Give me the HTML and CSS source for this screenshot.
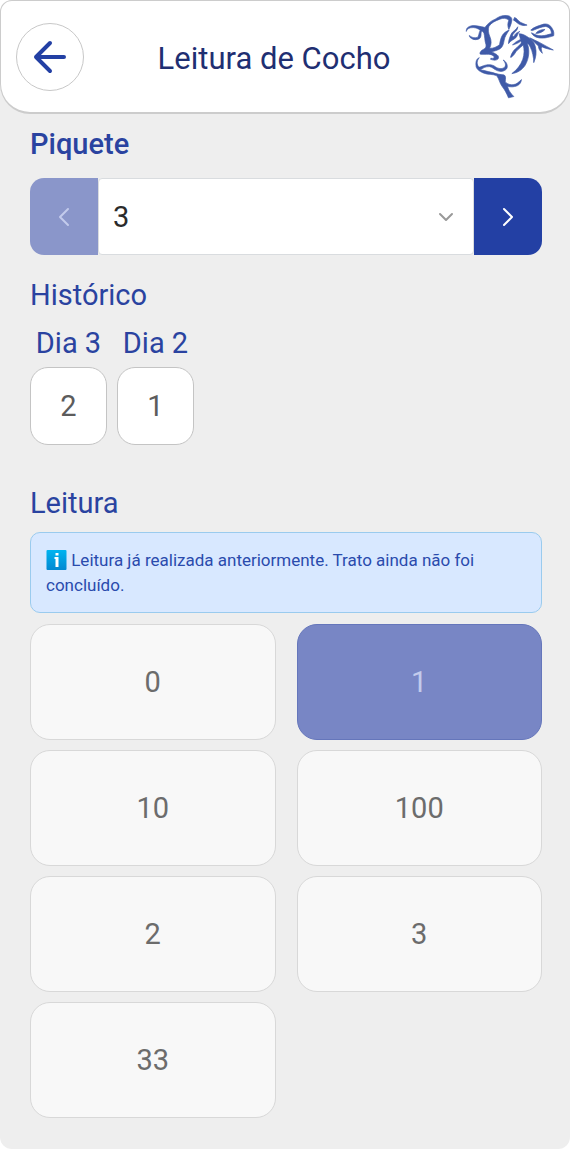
FILE: index.html
```html
<!DOCTYPE html>
<html lang="pt-BR">
<head>
<meta charset="utf-8">
<meta name="viewport" content="width=device-width, initial-scale=1">
<title>Leitura de Cocho</title>
<link rel="stylesheet" href="styles.css">
</head>
<body>
<div class="app">
  <header class="header">
    <button class="back" type="button" aria-label="Voltar">
      <svg class="back-icon" viewBox="0 0 34 34" aria-hidden="true"><path d="M31 17H3M17 3L3 17l14 14"/></svg>
    </button>
    <h1 class="title">Leitura de Cocho</h1>
    <svg class="logo" viewBox="30 25 280 264" aria-hidden="true">
      <path d="M37 80C36 70 43 65 53 63C67 61 80 66 93 68C101 57 111 48 124 43C134 36 145 31 157 32C168 32 175 38 174 46C173 56 169 65 165 74C162 67 160 58 165 46C158 40 148 39 138 43C126 48 112 53 105 65C102 73 103 85 108 96C113 108 113 119 107 131C119 131 128 127 137 120C139 108 141 99 146 91C150 85 156 80 166 76C158 88 153 96 151 106C149 117 147 126 139 132C131 137 122 139 113 141C123 147 134 150 134 158C134 166 124 169 110 164L111 161C118 162 121 160 121 156C116 151 108 147 98 149L80 149C76 148 78 141 85 136C94 132 98 127 96 119C92 108 93 95 90 85L85 79C79 83 83 91 80 97C78 104 68 106 58 104C50 101 45 96 46 92C52 98 62 101 70 98C76 94 74 84 79 77C72 70 61 67 50 69C42 71 39 74 37 80Z"/>
      <path d="M76 159C71 165 69 171 70 178C73 187 75 190 84 185C96 180 110 178 121 184C130 191 141 195 151 189C157 184 156 175 148 166C158 171 164 184 158 193C151 201 139 202 130 198C120 194 115 187 107 186C95 185 86 191 79 196L88 197C98 200 108 202 117 204C130 209 141 210 151 211C157 215 155 223 154 232C162 239 170 242 180 240C189 239 195 232 203 225C202 236 195 244 182 246C173 248 167 246 161 246C164 258 172 268 180 276L164 280C158 266 153 256 145 246C137 236 136 222 128 213C117 208 101 211 88 205C76 200 66 193 66 182C65 172 67 162 76 159Z"/>
      <path d="M182 38C190 40 193 49 201 53C207 56 213 58 220 61C212 64 202 62 194 57C188 53 184 48 179 46Z"/>
      <path d="M192 66C186 77 176 79 172 88C168 97 164 107 164 117C170 107 180 105 187 98C192 93 191 84 198 80C188 84 183 87 182 94C177 96 175 95 177 90C181 82 192 78 192 66Z"/>
      <path d="M231 76C240 67 254 63 270 58C281 56 291 61 296 72C301 79 301 87 300 93C285 98 266 103 250 98C238 94 235 88 233 84C242 89 252 94 264 93C274 93 284 89 293 87C294 75 286 66 275 65C264 66 252 71 242 75C238 77 235 79 231 76Z"/>
      <path d="M274 74C267 82 257 86 246 86C251 78 262 74 274 74Z"/>
      <path d="M196 87C207 87 216 93 225 99C236 106 243 115 245 127C249 142 247 158 240 174C240 158 236 140 230 128C227 121 223 117 220 115C228 134 227 160 214 182C204 197 190 205 174 207C190 195 201 181 207 164C212 149 212 132 208 121C198 130 187 138 182 148C176 155 174 158 170 158C173 143 183 133 192 126C200 119 205 115 201 109C195 115 185 118 176 121C183 112 193 108 200 104Z"/>
      <path d="M228 99C239 105 248 108 257 113C270 120 284 128 299 136C287 134 275 131 264 126C261 133 264 139 266 146C258 139 254 131 254 124C246 115 237 109 228 99Z"/>
    </svg>
  </header>

  <main class="content">
    <label class="heading heading-strong" for="piquete">Piquete</label>
    <div class="picker">
      <button class="step step-prev" type="button" aria-label="Piquete anterior" disabled>
        <svg class="step-icon" viewBox="0 0 12 20" aria-hidden="true"><path d="M10 2L2 10l8 8"/></svg>
      </button>
      <div class="select-wrap">
        <select class="select" id="piquete"><option>3</option></select>
        <svg class="caret" viewBox="0 0 16 10" aria-hidden="true"><path d="M2 2l6 6 6-6"/></svg>
      </div>
      <button class="step step-next" type="button" aria-label="Próximo piquete">
        <svg class="step-icon" viewBox="0 0 12 20" aria-hidden="true"><path d="M2 2l8 8-8 8"/></svg>
      </button>
    </div>

    <h2 class="heading">Histórico</h2>
    <dl class="history">
      <div class="day"><dt class="day-name">Dia 3</dt><dd class="day-value">2</dd></div>
      <div class="day"><dt class="day-name">Dia 2</dt><dd class="day-value">1</dd></div>
    </dl>

    <h2 class="heading">Leitura</h2>
    <p class="notice" role="status"><svg class="info" viewBox="0 0 20 20" role="img" aria-label="Informação"><defs><linearGradient id="info-fill" x1="0" y1="0" x2="0" y2="1"><stop offset="0" stop-color="#00b4f0"/><stop offset="1" stop-color="#0288d1"/></linearGradient></defs><rect width="20" height="20" rx="1" fill="url(#info-fill)"/><path fill="#fff" d="M9 3h3v2.500H9zM8 7h4v10H9V9H8z"/></svg> Leitura já realizada anteriormente. Trato ainda não foi concluído.</p>
    <div class="options">
      <button class="option" type="button" disabled>0</button>
      <button class="option option-selected" type="button" aria-pressed="true" disabled>1</button>
      <button class="option" type="button" disabled>10</button>
      <button class="option" type="button" disabled>100</button>
      <button class="option" type="button" disabled>2</button>
      <button class="option" type="button" disabled>3</button>
      <button class="option" type="button" disabled>33</button>
    </div>
  </main>
</div>
</body>
</html>
```

FILE: styles.css
```css
* {
  box-sizing: border-box;
}

body {
  margin: 0;
  background: #fff;
  font-family: Roboto, "Liberation Sans", sans-serif;
  font-size: 29px;
}

button,
select {
  font: inherit;
}

h1, h2, p, dl, dd {
  margin: 0;
  font-weight: 400;
}

.app {
  min-height: 100vh;
  background: #eee;
  border-radius: 12px;
}

.header {
  display: flex;
  align-items: center;
  justify-content: space-between;
  height: 114px;
  padding: 0 12px 0 15px;
  background: #fff;
  border: 1px solid #ccc;
  border-bottom-width: 2px;
  border-radius: 12px 12px 30px 30px;
}

.back {
  display: grid;
  place-items: center;
  width: 68px;
  height: 68px;
  padding: 0;
  background: #fff;
  border: 1px solid #c8c8c8;
  border-radius: 50%;
}

.back-icon {
  width: 34px;
  height: 34px;
  fill: none;
  stroke: #2340a4;
  stroke-width: 4;
  stroke-linecap: round;
  stroke-linejoin: round;
}

.title {
  padding-top: 4px;
  color: #1f2f72;
  font-size: 31px;
}

.logo {
  width: 93px;
  height: 88px;
  fill: #3f5aa8;
  stroke: #3f5aa8;
  stroke-width: 2;
  stroke-linejoin: round;
}

.content {
  padding: 12px 28px 30px 30px;
}

.heading {
  display: block;
  color: #2a43a0;
  font-size: 29px;
  line-height: 36px;
}

.heading-strong {
  font-weight: 500;
}

.picker {
  display: flex;
  height: 77px;
  margin: 16px 0 22px;
}

.step {
  display: grid;
  place-items: center;
  width: 68px;
  padding: 0;
  border: 0;
  background: #2340a4;
}

.step-prev {
  border-radius: 14px 0 0 14px;
  background: #8a96ca;
}

.step-next {
  border-radius: 0 14px 14px 0;
}

.step-icon {
  width: 12px;
  height: 20px;
  fill: none;
  stroke: #fff;
  stroke-width: 2;
  stroke-linecap: round;
  stroke-linejoin: round;
}

.step-prev .step-icon {
  stroke: #c3cbec;
}

.select-wrap {
  position: relative;
  flex: 1;
}

.select {
  width: 100%;
  height: 100%;
  padding: 0 48px 0 14px;
  appearance: none;
  border: 1px solid #d9dcdf;
  border-radius: 4px;
  background: #fff;
  color: #2b2b2b;
}

.caret {
  position: absolute;
  top: 50%;
  right: 20px;
  width: 16px;
  height: 10px;
  margin-top: -5px;
  fill: none;
  stroke: #999;
  stroke-width: 2;
  stroke-linecap: round;
  stroke-linejoin: round;
  pointer-events: none;
}

.history {
  display: flex;
  gap: 10px;
  margin: 12px 0 40px;
}

.day {
  width: 77px;
  text-align: center;
}

.day-name {
  color: #2a43a0;
  line-height: 36px;
}

.day-value {
  display: grid;
  place-items: center;
  height: 78px;
  margin-top: 6px;
  border: 1px solid #c4c4c4;
  border-radius: 18px;
  background: #fff;
  color: #5c5c5c;
}

.notice {
  margin: 11px 0;
  padding: 15px 15px 14px;
  border: 1px solid #9acbee;
  border-radius: 10px;
  background: #d8e8ff;
  color: #2a4bad;
  font-size: 17px;
  line-height: 25px;
}

.info {
  width: 21px;
  height: 20px;
  vertical-align: -4px;
}

.options {
  display: grid;
  grid-template-columns: 1fr 1fr;
  gap: 10px 21px;
}

.option {
  height: 116px;
  padding: 0;
  border: 1px solid #d8d8d8;
  border-radius: 20px;
  background: #f8f8f8;
  color: #6c6c6c;
}

.option-selected {
  border-color: #6576bb;
  background: #7886c5;
  color: #c3cbec;
}
```
